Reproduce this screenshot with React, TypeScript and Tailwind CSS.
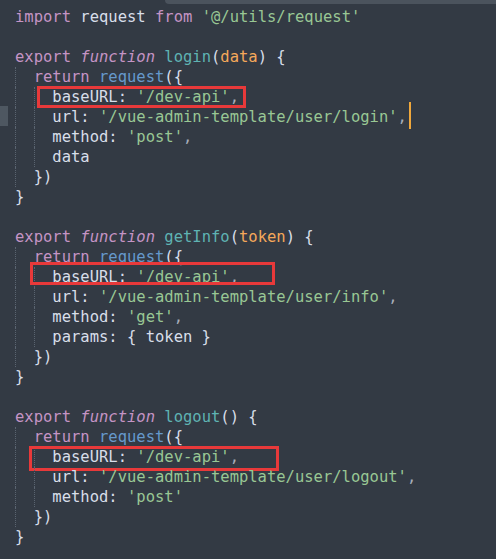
type Tok = [string, string]

const kw = 'text-[#c594c5]'
const it = 'text-[#c594c5] italic'
const pl = 'text-[#d8dee9]'
const fn = 'text-[#5fb3b3]'
const pa = 'text-[#f5a85a]'
const ca = 'text-[#6699cc]'
const st = 'text-[#99c794]'
const cm = 'text-[#a7adba]'

type Line = { indent: number; toks: Tok[]; box?: string; cursor?: boolean; mark?: boolean }

const lines: Line[] = [
  { indent: 0, toks: [[kw, 'import'], [pl, ' request '], [kw, 'from'], [pl, ' '], [st, "'@/utils/request'"]] },
  { indent: 0, toks: [] },
  { indent: 0, toks: [[kw, 'export'], [pl, ' '], [it, 'function'], [pl, ' '], [fn, 'login'], [pl, '('], [pa, 'data'], [pl, ') {']] },
  { indent: 2, toks: [[kw, 'return'], [pl, ' '], [ca, 'request'], [pl, '({']] },
  { indent: 4, toks: [[pl, 'baseURL: '], [st, "'/dev-api'"], [cm, ',']], box: 'left-[37px] w-[209px] -top-[1px] h-[22px]' },
  { indent: 4, toks: [[pl, 'url: '], [st, "'/vue-admin-template/user/login'"], [cm, ',']], cursor: true, mark: true },
  { indent: 4, toks: [[pl, 'method: '], [st, "'post'"], [cm, ',']] },
  { indent: 4, toks: [[pl, 'data']] },
  { indent: 2, toks: [[pl, '})']] },
  { indent: 0, toks: [[pl, '}']] },
  { indent: 0, toks: [] },
  { indent: 0, toks: [[kw, 'export'], [pl, ' '], [it, 'function'], [pl, ' '], [fn, 'getInfo'], [pl, '('], [pa, 'token'], [pl, ') {']] },
  { indent: 2, toks: [[kw, 'return'], [pl, ' '], [ca, 'request'], [pl, '({']] },
  { indent: 4, toks: [[pl, 'baseURL: '], [st, "'/dev-api'"], [cm, ',']], box: 'left-[30px] w-[245px] -top-[5px] h-[23px]' },
  { indent: 4, toks: [[pl, 'url: '], [st, "'/vue-admin-template/user/info'"], [cm, ',']] },
  { indent: 4, toks: [[pl, 'method: '], [st, "'get'"], [cm, ',']] },
  { indent: 4, toks: [[pl, 'params: { token }']] },
  { indent: 2, toks: [[pl, '})']] },
  { indent: 0, toks: [[pl, '}']] },
  { indent: 0, toks: [] },
  { indent: 0, toks: [[kw, 'export'], [pl, ' '], [it, 'function'], [pl, ' '], [fn, 'logout'], [pl, '() {']] },
  { indent: 2, toks: [[kw, 'return'], [pl, ' '], [ca, 'request'], [pl, '({']] },
  { indent: 4, toks: [[pl, 'baseURL: '], [st, "'/dev-api'"], [cm, ',']], box: 'left-[29px] w-[250px] -top-[1px] h-[25px]' },
  { indent: 4, toks: [[pl, 'url: '], [st, "'/vue-admin-template/user/logout'"], [cm, ',']] },
  { indent: 4, toks: [[pl, 'method: '], [st, "'post'"]] },
  { indent: 2, toks: [[pl, '})']] },
  { indent: 0, toks: [[pl, '}']] },
]

function Indent({ n }: { n: number }) {
  const units = []
  for (let i = 0; i < n / 2; i++) {
    units.push(<span key={i} className="inline-block w-[2ch] h-[20px] align-top border-l border-dotted border-[#5a6470]" />)
  }
  return <>{units}</>
}

export default function App() {
  return (
    <div className="relative w-[496px] h-[559px] overflow-hidden bg-[#333a44] pt-[7px] pl-[15px] font-['DejaVu_Sans_Mono','Liberation_Mono',monospace] text-[15.5px] leading-[20px] whitespace-pre">
      <div className="absolute top-0 left-[165px] right-0 h-[4px] rounded-bl-[4px] bg-[#4b535d]" />
      {lines.map((l, i) => (
        <div key={i} className="relative h-[20px]">
          {l.mark && <div className="absolute -left-[15px] -top-[1px] w-[8px] h-[20px] bg-[#4e5761]" />}
          {l.box && <div className={`absolute -ml-[15px] border-[3px] border-[#e8393a] ${l.box}`} />}
          <Indent n={l.indent} />
          {l.toks.map(([c, t], j) => (
            <span key={j} className={c}>{t}</span>
          ))}
          {l.cursor && <span className="inline-block w-[2px] h-[27px] -mt-[5px] ml-[2px] align-top bg-[#f0a83c]" />}
        </div>
      ))}
    </div>
  )
}
